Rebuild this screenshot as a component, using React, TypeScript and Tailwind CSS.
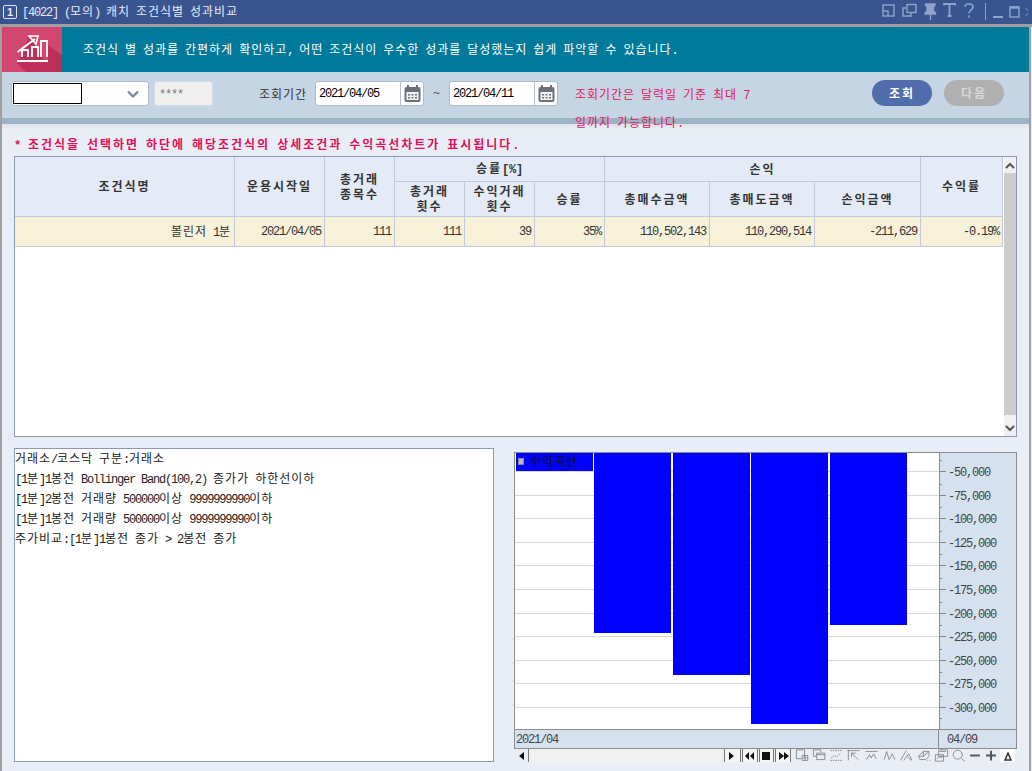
import { Fragment } from "react";

// Gulim-like metrics: hangul is one full cell, everything else a half cell
function Gu({ text, bold = false }: { text: string; bold?: boolean }) {
  const parts = text.split(/([\uac00-\ud7a3]+)/).filter(Boolean);
  return (
    <>
      {parts.map((part, i) =>
        /[\uac00-\ud7a3]/.test(part) ? (
          <span
            key={i}
            className={`font-['Noto_Sans_CJK_KR'] whitespace-pre ${
              bold ? "font-bold tracking-[1.96px]" : "font-normal tracking-[0.96px]"
            }`}>
            {part}
          </span>
        ) : (
          <span
            key={i}
            className={`font-['Liberation_Mono'] whitespace-pre ${
              bold ? "font-bold tracking-[-0.2px]" : "font-normal tracking-[-1.2px]"
            }`}>
            {part}
          </span>
        )
      )}
    </>
  );
}

function TitleIcons() {
  return (
    <svg width="146" height="18" viewBox="0 0 146 18" fill="none" stroke="#8fa3c9" strokeWidth="1.4" className="mr-[4px]">
      <rect x="1" y="2" width="11" height="11" />
      <path d="M1 8h5V13" />
      <rect x="25" y="1.5" width="9" height="8" />
      <path d="M24 5h-3v8h8v-3" />
      <path d="M44 1h9v1.5l-1.5 1V8l2 2v1H43v-1l2-2V3.500L43.500 2.500z M48.500 11v6" fill="#8fa3c9" />
      <path d="M62 2.500V1h11v1.500M67.500 1v12M65.500 13h4" strokeWidth="1.800" />
      <path d="M83 4c0-4 8-4 8 0 0 3-4 3-4 6.500M87 12.500v2" strokeWidth="1.600" />
      <path d="M103.500 0v17" strokeWidth="1" />
      <path d="M111 14h10" strokeWidth="2" />
      <rect x="128" y="4" width="9" height="10" />
      <path d="M128 4.500h9" strokeWidth="2.500" />
      <path d="M145 5l-7.500 8M137.500 5l7.500 8" strokeWidth="1" transform="translate(6)" />
    </svg>
  );
}

function CalendarButton() {
  return (
    <span className="flex w-[23px] items-center justify-center border-l border-[#b4bfcd]">
      <svg width="17" height="17" viewBox="0 0 17 17">
        <rect x="0.500" y="2" width="16" height="15" rx="2" fill="#6b7179" />
        <rect x="2.500" y="7" width="12" height="8" fill="#f4f4f4" />
        <rect x="3" y="0" width="2" height="4" fill="#6b7179" />
        <rect x="12" y="0" width="2" height="4" fill="#6b7179" />
        <path d="M4 9h2v1.500H4zM7.500 9h2v1.500h-2zM11 9h2v1.500h-2zM4 12h2v1.500H4zM7.500 12h2v1.500h-2zM11 12h2v1.500h-2z" fill="#6b7179" />
      </svg>
    </span>
  );
}

function DateInput({ value }: { value: string }) {
  return (
    <div className="flex h-[25px] w-[109px] rounded-[3px] border border-[#aeb9c9] bg-white text-[12px] leading-[23px] text-black">
      <span className="flex-1 pl-[3px]">
        <Gu text={value} />
      </span>
      <CalendarButton />
    </div>
  );
}

function Header() {
  return (
    <>
      <div className="flex h-[24px] items-center justify-between bg-[#3a5490] text-[12px] text-[#e6ebf5]">
        <div className="flex items-center">
          <span className="ml-[3px] flex h-[14px] w-[14px] items-center justify-center rounded-[2px] border border-[#dfe5f2] font-['Liberation_Sans'] text-[11px] font-bold leading-none">
            1
          </span>
          <span className="ml-[5px]">
            <Gu text="[4022] (모의) 캐치 조건식별 성과비교" />
          </span>
        </div>
        <TitleIcons />
      </div>
      <div className="h-[3px] bg-[#a0a0a0]" />
    </>
  );
}

function Banner() {
  return (
    <div className="flex h-[45px] items-center bg-[#007a9a] text-[12px] text-white">
      <svg width="60" height="45" viewBox="0 0 60 45" fill="none">
        <rect width="60" height="45" fill="#d2466f" />
        <path d="M15 36h31l-10-10-4-10-6-6L22 25zM15 36l9 9h36V28L46 18V36z" fill="#bd2f5b" />
        <g stroke="#fff" strokeWidth="2">
          <path d="M15 34h31" />
          <path d="M20 30v-7h6v7M30 30V20h6v10M39 30V14h6v16" strokeWidth="1.800" />
          <path d="M15.500 25L33 12" />
          <path d="M27 9h9l-2 8z" strokeWidth="1.600" />
        </g>
      </svg>
      <span className="ml-[21px]">
        <Gu text="조건식 별 성과를 간편하게 확인하고, 어떤 조건식이 우수한 성과를 달성했는지 쉽게 파악할 수 있습니다." />
      </span>
    </div>
  );
}

function FilterBar() {
  return (
    <div className="flex h-[46px] items-start bg-[#c5d5e3] pl-[9px] pt-[9px] text-[12px]">
      <div className="flex h-[25px] w-[138px] items-center rounded-[3px] border border-[#aeb9c9] bg-white pl-[1px] pr-[9px]">
        <div className="h-[21px] w-[69px] border border-black" />
        <svg width="12" height="8" viewBox="0 0 12 8" fill="none" stroke="#7c8795" strokeWidth="2.200" className="ml-auto">
          <path d="M1 1.500l5 5 5-5" />
        </svg>
      </div>
      <div className="ml-[5px] h-[25px] w-[59px] rounded-[3px] border border-[#d4dbe4] bg-[#efefef] pl-[4px] leading-[25px] text-[#777]">
        <Gu text="****" />
      </div>
      <span className="ml-[46px] leading-[25px] text-[#333]">
        <Gu text="조회기간" />
      </span>
      <div className="ml-[8px]">
        <DateInput value="2021/04/05" />
      </div>
      <span className="w-[25px] text-center leading-[25px] text-[#555]">~</span>
      <DateInput value="2021/04/11" />
      <span className="ml-[17px] w-[282px] leading-[25px] text-[#e0185f]">
        <Gu text="조회기간은 달력일 기준 최대 7일까지 가능합니다." />
      </span>
      <button className="-mt-[1px] ml-[15px] h-[26px] w-[60px] rounded-full bg-[#516dab] text-white">
        <Gu text="조회" bold />
      </button>
      <button className="-mt-[1px] ml-[12px] h-[26px] w-[60px] rounded-full bg-[#b0b0b0] text-[#d8d8d8]">
        <Gu text="다음" bold />
      </button>
    </div>
  );
}

const headCell = "border-b border-r border-[#c3c9d9] bg-[#e4ebf6] p-0 text-center font-normal leading-[14px] text-[#333]";
const bodyCell = "border-b border-r border-[#c3c9d9] bg-[#f7f1da] p-0 pr-[3px] text-right text-[#333]";

const row = ["111", "111", "39", "35%", "110,502,143", "110,290,514", "-211,629", "-0.19%"];

function ResultTable() {
  return (
    <div className="flex h-[281px] border border-[#8f97b8] bg-white text-[12px]">
      <table className="h-fit w-[988px] table-fixed border-separate border-spacing-0">
        <colgroup>
          <col className="w-[220px]" />
          <col className="w-[90px]" />
          <col className="w-[70px]" />
          <col className="w-[70px]" />
          <col className="w-[70px]" />
          <col className="w-[70px]" />
          <col className="w-[105px]" />
          <col className="w-[105px]" />
          <col className="w-[106px]" />
          <col className="w-[82px]" />
        </colgroup>
        <thead>
          <tr className="h-[25px]">
            <th rowSpan={2} className={headCell}>
              <Gu text="조건식명" bold />
            </th>
            <th rowSpan={2} className={headCell}>
              <Gu text="운용시작일" bold />
            </th>
            <th rowSpan={2} className={headCell}>
              <Gu text="총거래" bold />
              <br />
              <Gu text="종목수" bold />
            </th>
            <th colSpan={3} className={headCell}>
              <Gu text="승률[%]" bold />
            </th>
            <th colSpan={3} className={headCell}>
              <Gu text="손익" bold />
            </th>
            <th rowSpan={2} className={headCell}>
              <Gu text="수익률" bold />
            </th>
          </tr>
          <tr className="h-[35px]">
            <th className={headCell}>
              <Gu text="총거래" bold />
              <br />
              <Gu text="횟수" bold />
            </th>
            <th className={headCell}>
              <Gu text="수익거래" bold />
              <br />
              <Gu text="횟수" bold />
            </th>
            <th className={headCell}>
              <Gu text="승률" bold />
            </th>
            <th className={headCell}>
              <Gu text="총매수금액" bold />
            </th>
            <th className={headCell}>
              <Gu text="총매도금액" bold />
            </th>
            <th className={headCell}>
              <Gu text="손익금액" bold />
            </th>
          </tr>
        </thead>
        <tbody>
          <tr className="h-[30px]">
            <td className={`${bodyCell} pl-[2px] text-left`}>
              <Gu text="볼린저 1분" />
            </td>
            <td className={`${bodyCell} pr-0 text-center`}>
              <Gu text="2021/04/05" />
            </td>
            {row.map((value) => (
              <td key={value + Math.random()} className={bodyCell}>
                <Gu text={value} />
              </td>
            ))}
          </tr>
        </tbody>
      </table>
      <div className="ml-[1px] flex w-[16px] flex-col bg-[#f0f0f0]">
        <div className="flex h-[16px] items-center justify-center">
          <svg width="10" height="7" viewBox="0 0 10 7" fill="none" stroke="#555" strokeWidth="2">
            <path d="M1 6l4-4 4 4" />
          </svg>
        </div>
        <div className="h-[242px] bg-[#cdcdcd]" />
        <div className="mt-auto flex h-[16px] items-center justify-center">
          <svg width="10" height="7" viewBox="0 0 10 7" fill="none" stroke="#555" strokeWidth="2">
            <path d="M1 1l4 4 4-4" />
          </svg>
        </div>
      </div>
    </div>
  );
}

const detailLines = [
  "거래소/코스닥 구분:거래소",
  "[1분]1봉전 Bollinger Band(100,2) 종가가 하한선이하",
  "[1분]2봉전 거래량 500000이상 9999999990이하",
  "[1분]1봉전 거래량 500000이상 9999999990이하",
  "주가비교:[1분]1봉전 종가 > 2봉전 종가",
];

function DetailBox() {
  return (
    <div className="h-[314px] w-[484px] border border-[#8f97b8] bg-white pt-[-1px] text-[12px] leading-[18px] text-[#222]">
      {detailLines.map((line) => (
        <div key={line}>
          <Gu text={line} />
        </div>
      ))}
    </div>
  );
}

const labels = ["-50,000", "-75,000", "-100,000", "-125,000", "-150,000", "-175,000", "-200,000", "-225,000", "-250,000", "-275,000", "-300,000"];
const bars = [
  { x: 79, w: 77, bottom: 180 },
  { x: 158, w: 77, bottom: 222 },
  { x: 236, w: 77, bottom: 271 },
  { x: 315, w: 77, bottom: 172 },
];

function Plot() {
  return (
    <svg width="501" height="276" viewBox="0 0 501 276" className="block">
      <rect width="424" height="276" fill="#fff" />
      <rect x="424" width="77" height="276" fill="#d5e1ef" />
      {labels.map((label, i) => {
        const y = Math.round(18 + i * 23.6) + 0.5;
        return (
          <Fragment key={label}>
            <path d={`M0 ${y}H424`} stroke="#d8d8d8" />
            <path d={`M424 ${y}h7M424 ${Math.round(y - 12) + 0.5}h3`} stroke="#888" />
            <text x="433" y={y + 4} fontSize="12" fill="#444" className="font-['Liberation_Mono'] tracking-[-1.2px]">
              {label}
            </text>
          </Fragment>
        );
      })}
      <path d="M424 265.500h3" stroke="#888" />
      <path d="M424.500 0V276" stroke="#8c8c8c" />
      {bars.map((bar) => (
        <rect key={bar.x} x={bar.x} y="0" width={bar.w} height={bar.bottom} fill="#0000ff" />
      ))}
      <rect x="1" y="0" width="77" height="18" fill="#0000ff" />
      <rect x="3.500" y="5.500" width="5" height="6" fill="#b9b9b9" stroke="#8a8a8a" />
      <text x="15" y="13" fontSize="12" fill="#111" className="font-['Noto_Sans_CJK_KR'] tracking-[0.96px]">
        수익곡선
      </text>
    </svg>
  );
}

const toolIcons = [
  { w: 17, d: "M1 1h10v9M1 1v11h6M8 8h7v6H8zM11.500 8v6M8 11h7" },
  { w: 17, d: "M1 1h9v3M1 1v8h4M5 5h10v8H5zM5 7h10" },
  { w: 17, d: "M1 2h14M2 11l4-3 2 2 6-5M1 14h14", dash: true },
  { w: 18, d: "M2 1v13M1 2h15M6 5l8 8M6 5h5M6 5v5" },
  { w: 18, d: "M1 3h15M2 13l4-6 2 4 3-5 3 6" },
  { w: 17, d: "M2 13l3-10 3 10 4-7 3 7" },
  { w: 18, d: "M1 14l7-12M5 14l6-8 4 8M9 9l5 5" },
  { w: 17, d: "M1 9l6-6h7v6l-4 4H3zM7 3v6H1M7 9l7-6M12 14h1M15 14h1" },
  { w: 17, d: "M5 1h11v8H5zM1 7h10v8H1zM3 12l3-3 2 2 2-3M6 3h8" },
  { w: 17, d: "M12 12l4 3M2 7a5.500 5.500 0 1 0 11 0a5.500 5.500 0 1 0-11 0" },
  { w: 16, d: "M2 8h12", sw: 2.4 },
  { w: 16, d: "M2 8h12M8 2v12", sw: 2.4 },
];

function ChartToolbar() {
  return (
    <div className="flex h-[13px] w-[501px] items-start overflow-hidden">
      <span className="ml-[1px] flex h-[13px] w-[14px] items-center justify-center border-r border-[#777] text-[#222]">
        <svg width="5" height="8" viewBox="0 0 5 8">
          <path d="M5 0v8L0 4z" fill="#111" />
        </svg>
      </span>
      <span className="h-[13px] w-[196px] bg-[#f0f0f0]" />
      {["M2 0v8l5-4z", "M5 0v8L1 4zM10 0v8L6 4z", "M1 0h8v8H1z", "M1 0v8l5-4zM6 0v8l5-4z"].map((d, i) => (
        <span key={d} className={`flex h-[13px] items-center justify-center border-x border-[#777] bg-[#f4f4f4] ${i === 0 ? "ml-[2px] w-[17px]" : "ml-[1px] w-[16px]"}`}>
          <svg width="11" height="8" viewBox="0 0 11 8">
            <path d={d} fill="#111" />
          </svg>
        </span>
      ))}
      <span className="w-[3px]" />
      {toolIcons.map((icon) => (
        <svg
          key={icon.d}
          width={icon.w}
          height="13"
          viewBox={`0 0 ${icon.w} 16`}
          fill="none"
          stroke={icon.sw ? "#555" : "#7d7d7d"}
          strokeWidth={icon.sw ?? 1}
          strokeDasharray={icon.dash ? "2 1" : undefined}
          className="shrink-0">
          <path d={icon.d} />
        </svg>
      ))}
      <span className="ml-[1px] flex h-[13px] w-[15px] items-end justify-center bg-white pb-[1px]">
        <svg width="8" height="9" viewBox="0 0 8 9" fill="none" stroke="#333" strokeWidth="1.500">
          <path d="M4 1L1 8h6z" />
        </svg>
      </span>
    </div>
  );
}

function ChartPanel() {
  return (
    <div className="ml-[20px] w-[503px] pt-[4px]">
      <div className="border border-[#8c8c8c]">
        <Plot />
        <div className="flex h-[19px] border-t border-[#8c8c8c] bg-[#d5e1ef] text-[12px] leading-[18px] text-[#444]">
          <span className="w-[424px] border-r border-[#8c8c8c] pl-[1px]">
            <Gu text="2021/04" />
          </span>
          <span className="pl-[8px]">
            <Gu text="04/09" />
          </span>
        </div>
      </div>
      <ChartToolbar />
    </div>
  );
}

export default function App() {
  return (
    <div className="flex h-[771px] w-[1032px] flex-col overflow-hidden bg-[#e9eef6] font-['Liberation_Sans',sans-serif]">
      <Header />
      <div className="mr-[1px] flex-1 border-x-2 border-[#a0a0a0]">
        <Banner />
        <FilterBar />
        <div className="h-[6px] bg-[#9db3c6]" />
        <div className="h-[6px] bg-gradient-to-b from-[#dfe3e9] to-[#e9eef6]" />
        <div className="px-[12px]">
          <div className="h-[26px] pt-[7px] text-[12px] leading-[14px] text-[#e0105a]">
            <Gu text="* 조건식을 선택하면 하단에 해당조건식의 상세조건과 수익곡선차트가 표시됩니다." bold />
          </div>
          <ResultTable />
          <div className="mt-[11px] flex">
            <DetailBox />
            <ChartPanel />
          </div>
        </div>
      </div>
    </div>
  );
}
